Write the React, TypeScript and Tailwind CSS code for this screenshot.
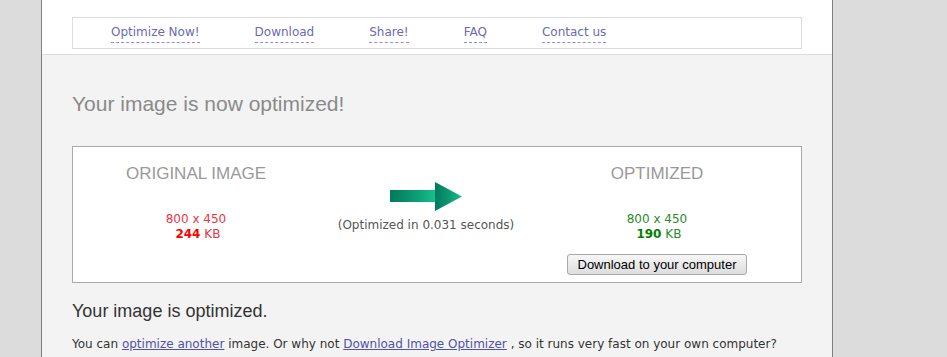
import React from "react";

const navLinks = ["Optimize Now!", "Download", "Share!", "FAQ", "Contact us"];

const Arrow = () => (
  <svg width="72" height="29" viewBox="0 0 72 29">
    <defs>
      <linearGradient id="arrowFill" x1="0" y1="0" x2="1" y2="0">
        <stop offset="0" stopColor="#007a5c" />
        <stop offset="0.55" stopColor="#0d9b74" />
        <stop offset="1" stopColor="#16c18f" />
      </linearGradient>
    </defs>
    <rect x="0" y="8" width="46" height="12" fill="url(#arrowFill)" />
    <polygon points="45,0 72,14.5 45,29" fill="url(#arrowFill)" />
  </svg>
);

const App = () => {
  return (
    <div className="flex min-h-[357px] bg-[#dcdcdc] font-['DejaVu_Sans',Verdana,sans-serif] text-[12px]">
      <div className="w-[41px] shrink-0" />
      <div className="w-[792px] shrink-0 border-x border-[#808080] bg-[#f3f3f3]">
        {/* header */}
        <div className="h-[55px] bg-white border-b border-[#dddddd] pt-[17px] pl-[30px]">
          <div className="flex h-[32px] w-[730px] gap-[55px] border border-[#dddddd] pl-[38px] pt-[7px]">
            {navLinks.map((l) => (
              <a
                key={l}
                href="#"
                className="inline-block h-[18px] leading-[15px] pb-[2px] border-b border-dashed border-[#8c8ce0] text-[#6a6ab8]"
              >
                {l}
              </a>
            ))}
          </div>
        </div>

        <div className="pl-[30px]">
          <h1 className="mt-[37px] text-[21px] leading-[24px] text-[#8a8a8a] font-['Liberation_Sans',Arial,sans-serif]">
            Your image is now optimized!
          </h1>

          {/* result box */}
          <div className="mt-[30px] grid h-[137px] w-[730px] grid-cols-[246px_214px_248px] border border-[#aaaaaa] bg-white">
            <div className="flex flex-col items-center pt-[18px]">
              <div className="text-[17px] leading-[18px] text-[#999999] font-['Liberation_Sans',Arial,sans-serif]">
                ORIGINAL IMAGE
              </div>
              <div className="mt-[29px] text-center leading-[15px] text-[#ee3344]">
                <div>800 x 450</div>
                <div>
                  &nbsp;<b className="text-[#ff0000]">244</b> KB
                </div>
              </div>
            </div>

            <div className="flex flex-col items-center pt-[35px]">
              <Arrow />
              <div className="mt-[7px] leading-[15px] text-[#555555]">
                (Optimized in 0.031 seconds)
              </div>
            </div>

            <div className="flex flex-col items-center pt-[18px]">
              <div className="text-[17px] leading-[18px] text-[#999999] font-['Liberation_Sans',Arial,sans-serif]">
                OPTIMIZED
              </div>
              <div className="mt-[29px] text-center leading-[15px] text-[#2a8a2a]">
                <div>800 x 450</div>
                <div>
                  &nbsp;<b className="text-[#008000]">190</b> KB
                </div>
              </div>
              <button className="mt-[12px] h-[21px] w-[180px] rounded-[3px] border border-[#a9a9a9] bg-gradient-to-b from-[#f7f7f7] to-[#dddddd] text-[13px] leading-[18px] text-black font-['Liberation_Sans',Arial,sans-serif]">
                Download to your computer
              </button>
            </div>
          </div>

          <h2 className="mt-[18px] text-[18px] leading-[21px] text-[#333333] font-['Liberation_Sans',Arial,sans-serif]">
            Your image is optimized.
          </h2>
          <p className="mt-[15px] leading-[15px] text-[#333333] whitespace-nowrap">
            You can{" "}
            <a href="#" className="underline text-[#5252a8]">
              optimize another
            </a>{" "}
            image. Or why not{" "}
            <a href="#" className="underline text-[#5252a8]">
              Download Image Optimizer
            </a>{" "}
            , so it runs very fast on your own computer?
          </p>
        </div>
      </div>
      <div className="flex-1" />
    </div>
  );
};

export default App;
